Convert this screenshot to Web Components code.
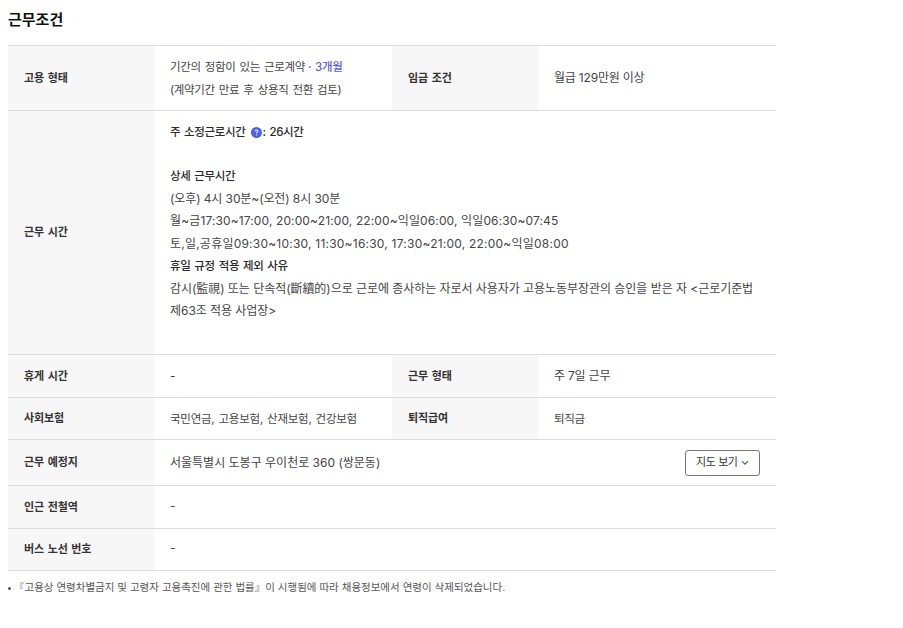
<!DOCTYPE html>
<html lang="ko">
<head>
<meta charset="utf-8">
<title>근무조건</title>
<style>
    body {
        margin: 0;
        background: #fff;
        font-family: Inter, "Noto Sans CJK KR", sans-serif;
        color: #222;
    }
    /* line widths in the source vary, so tighter lines get this */
    .tight { letter-spacing: -.33px; word-spacing: 1.1px; font-size: 11.5px; }
    .snug { letter-spacing: -.2px; }
    strong { font-weight: 500; color: #2b2b2b; }
</style>
</head>
<body>
<work-conditions>
    <span slot="title">근무조건</span>

    <cond-row height="65">
        <cond-cell label="고용 형태">
            <div class="tight" style="padding-top:1px">기간의 정함이 있는 근로계약 <b-accent style="margin-left:-1px">· 3개월</b-accent></div>
            <div class="tight">(계약기간 만료 후 상용직 전환 검토)</div>
        </cond-cell>
        <cond-cell label="임금 조건"><div class="snug">월급 129만원 이상</div></cond-cell>
    </cond-row>

    <cond-row height="244">
        <cond-cell label="근무 시간" wide top>
            <div class="tight" style="padding-top:1px;margin-bottom:-1px"><strong>주 소정근로시간 <help-icon></help-icon>: 26시간</strong></div>
            <div>&nbsp;</div>
            <div class="tight"><strong>상세 근무시간</strong></div>
            <div style="letter-spacing:-.1px">(오후) 4시 30분~(오전) 8시 30분</div>
            <div style="letter-spacing:.12px">월~금17:30~17:00, 20:00~21:00, 22:00~익일06:00, 익일06:30~07:45</div>
            <div style="letter-spacing:.22px">토,일,공휴일09:30~10:30, 11:30~16:30, 17:30~21:00, 22:00~익일08:00</div>
            <div class="tight"><strong>휴일 규정 적용 제외 사유</strong></div>
            <div style="letter-spacing:-.05px">감시(監視) 또는 단속적(斷續的)으로 근로에 종사하는 자로서 사용자가 고용노동부장관의 승인을 받은 자 &lt;근로기준법 제63조 적용 사업장&gt;</div>
        </cond-cell>
    </cond-row>

    <cond-row height="43">
        <cond-cell label="휴게 시간">-</cond-cell>
        <cond-cell label="근무 형태"><div class="snug">주 7일 근무</div></cond-cell>
    </cond-row>

    <cond-row height="42">
        <cond-cell label="사회보험"><div class="tight" style="padding-top:1px;letter-spacing:-.24px">국민연금, 고용보험, 산재보험, 건강보험</div></cond-cell>
        <cond-cell label="퇴직급여"><div class="tight" style="padding-top:1px">퇴직금</div></cond-cell>
    </cond-row>

    <cond-row height="46">
        <cond-cell label="근무 예정지" wide>
            <div style="display:flex;align-items:center;justify-content:space-between">
                <span style="padding-top:1px">서울특별시 도봉구 우이천로 360 (쌍문동)</span>
                <map-button>지도 보기</map-button>
            </div>
        </cond-cell>
    </cond-row>

    <cond-row height="43">
        <cond-cell label="인근 전철역" wide><div style="margin-top:-2px">-</div></cond-cell>
    </cond-row>

    <cond-row height="42">
        <cond-cell label="버스 노선 번호" wide><div style="margin-top:-2px">-</div></cond-cell>
    </cond-row>

    <span slot="note">『고용상 연령차별금지 및 고령자 고용촉진에 관한 법률』이 시행됨에 따라 채용정보에서 연령이 삭제되었습니다.</span>
</work-conditions>

<script>
class WorkConditions extends HTMLElement {
    constructor() {
        super();
        this.attachShadow({ mode: 'open' });
        this.shadowRoot.innerHTML = `
            <style>
                :host {
                    display: block;
                    width: 768px;
                    padding: 0 8px;
                }
                h2 {
                    margin: 0;
                    height: 45px;
                    padding-top: 9px;
                    box-sizing: border-box;
                    font-size: 15px;
                    line-height: 22px;
                    font-weight: 700;
                    color: #111;
                }
                .table {
                    border-top: 1px solid #ddd;
                }
                ul {
                    margin: 9px 0 0;
                    padding: 0;
                    list-style: none;
                    font-size: 10.5px;
                    line-height: 16px;
                    color: #555;
                }
                li {
                    display: flex;
                    align-items: center;
                    gap: 3px;
                }
                li::before {
                    content: "";
                    width: 3px;
                    height: 3px;
                    border-radius: 50%;
                    background: #555;
                    margin-top: 1px;
                }
            </style>
            <h2><slot name="title"></slot></h2>
            <div class="table"><slot></slot></div>
            <ul><li><span><slot name="note"></slot></span></li></ul>
        `;
    }
}

class CondRow extends HTMLElement {
    constructor() {
        super();
        this.attachShadow({ mode: 'open' });
    }

    connectedCallback() {
        const height = this.getAttribute('height') || '43';
        this.shadowRoot.innerHTML = `
            <style>
                :host {
                    display: flex;
                    box-sizing: border-box;
                    height: ${height}px;
                    border-bottom: 1px solid #ddd;
                }
            </style>
            <slot></slot>
        `;
    }
}

class CondCell extends HTMLElement {
    constructor() {
        super();
        this.attachShadow({ mode: 'open' });
    }

    connectedCallback() {
        const label = this.getAttribute('label') || '';
        const top = this.hasAttribute('top');
        this.shadowRoot.innerHTML = `
            <style>
                :host {
                    display: flex;
                    flex: 1 1 0;
                    min-width: 0;
                }
                :host([wide]) {
                    flex: 2 1 0;
                }
                .label {
                    flex: 0 0 146px;
                    box-sizing: border-box;
                    display: flex;
                    align-items: center;
                    padding: 0 0 1px 16px;
                    background: #f7f7f7;
                    font-size: 11px;
                    line-height: 22px;
                    letter-spacing: -.12px;
                    word-spacing: 1px;
                    font-weight: 600;
                    color: #333;
                }
                .value {
                    flex: 1;
                    min-width: 0;
                    box-sizing: border-box;
                    display: flex;
                    flex-direction: column;
                    justify-content: ${top ? 'flex-start' : 'center'};
                    padding: ${top ? '9px' : '0'} 16px 0;
                    font-size: 12px;
                    line-height: 22.5px;
                    color: #444;
                }
            </style>
            <div class="label">${label}</div>
            <div class="value"><slot></slot></div>
        `;
    }
}

class AccentText extends HTMLElement {
    constructor() {
        super();
        this.attachShadow({ mode: 'open' });
        this.shadowRoot.innerHTML = `
            <style>
                :host { display: inline; color: #5a5fe0; font-weight: 500; }
            </style>
            <slot></slot>
        `;
    }
}

class HelpIcon extends HTMLElement {
    constructor() {
        super();
        this.attachShadow({ mode: 'open' });
        this.shadowRoot.innerHTML = `
            <style>
                :host {
                    display: inline-flex;
                    width: 11px;
                    height: 11px;
                    margin-left: 2px;
                    vertical-align: -1.5px;
                }
                svg { display: block; }
            </style>
            <svg width="11" height="11" viewBox="0 0 12 12">
                <circle cx="6" cy="6" r="6" fill="#4e63e0"/>
                <path d="M4.5 4.7c0-.9.7-1.4 1.5-1.4s1.5.5 1.5 1.3c0 1.1-1.5 1.1-1.5 2.2" fill="none" stroke="#fff" stroke-width="1.1"/>
                <circle cx="6" cy="8.5" r=".7" fill="#fff"/>
            </svg>
        `;
    }
}

class MapButton extends HTMLElement {
    constructor() {
        super();
        this.attachShadow({ mode: 'open' });
        this.shadowRoot.innerHTML = `
            <style>
                :host { display: block; }
                button {
                    display: flex;
                    align-items: center;
                    gap: 3px;
                    box-sizing: border-box;
                    width: 75px;
                    height: 26px;
                    padding: 0 0 0 10px;
                    background: #fff;
                    border: 1px solid #777;
                    border-radius: 3px;
                    font: inherit;
                    font-size: 11px;
                    letter-spacing: -.4px;
                    color: #333;
                }
            </style>
            <button>
                <slot></slot>
                <svg width="8" height="6" viewBox="0 0 8 6">
                    <path d="M1 1.2 4 4.2 7 1.2" fill="none" stroke="#555" stroke-width="1.1"/>
                </svg>
            </button>
        `;
    }
}

customElements.define('work-conditions', WorkConditions);
customElements.define('cond-row', CondRow);
customElements.define('cond-cell', CondCell);
customElements.define('b-accent', AccentText);
customElements.define('help-icon', HelpIcon);
customElements.define('map-button', MapButton);
</script>
</body>
</html>
